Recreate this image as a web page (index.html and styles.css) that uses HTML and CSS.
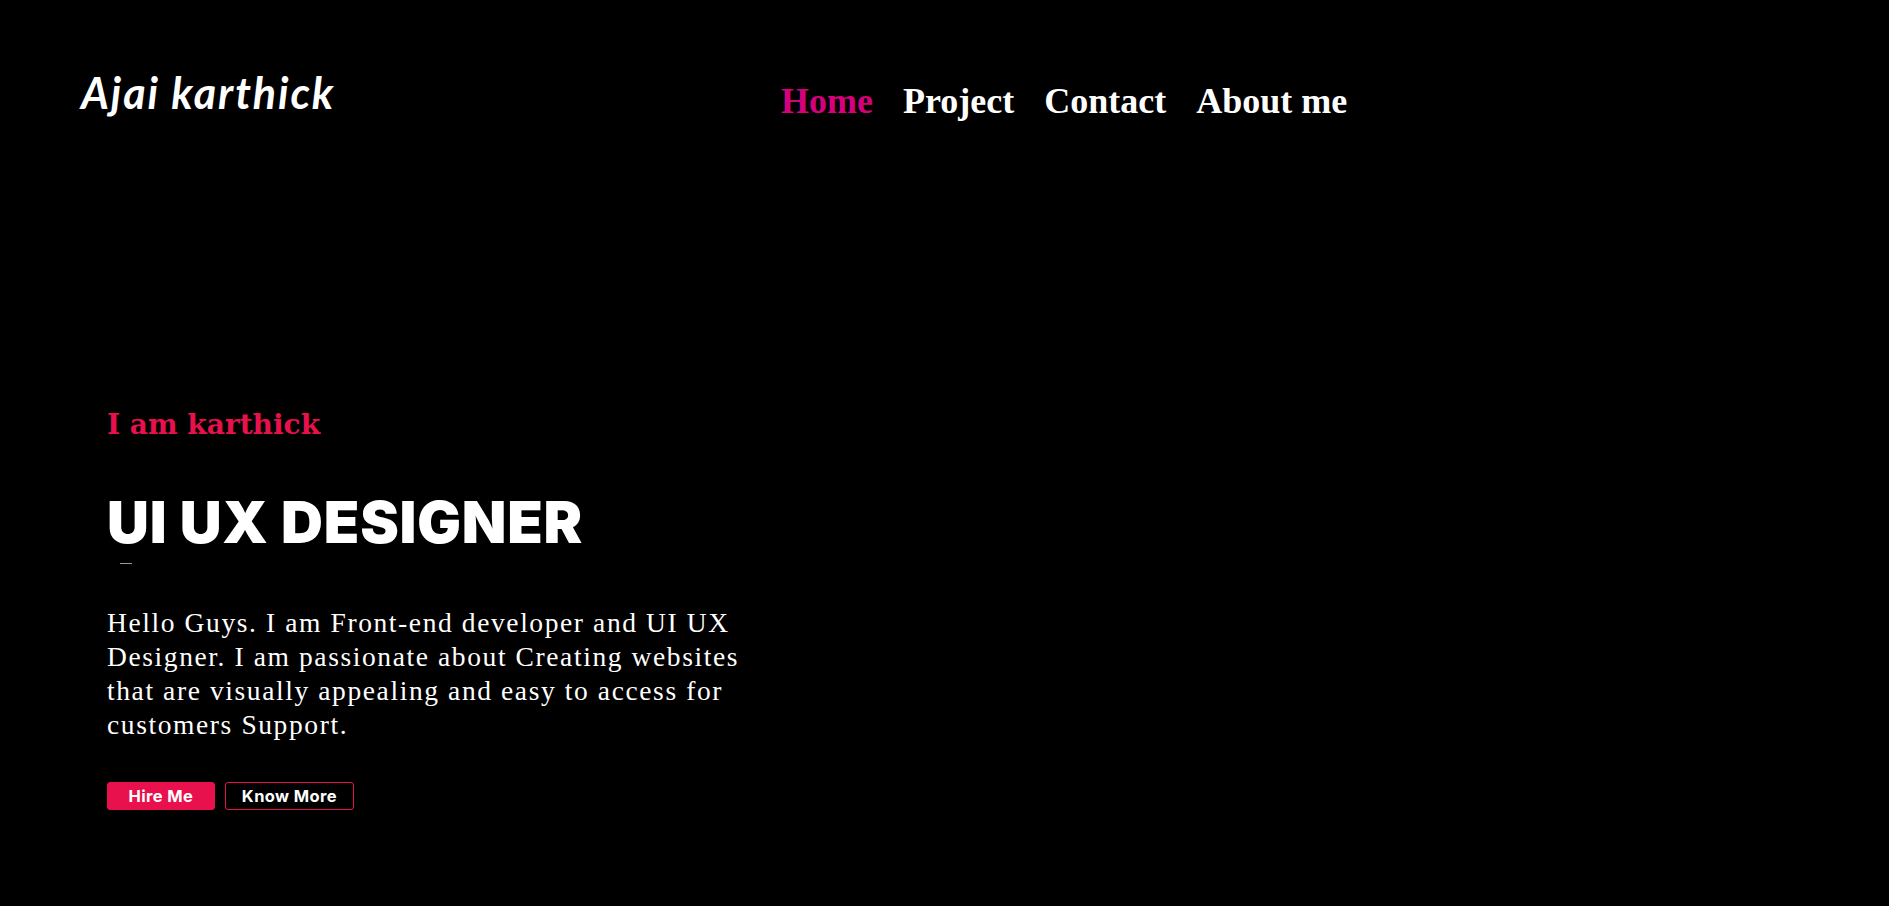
FILE: index.html
```html
<!DOCTYPE html>
<html lang="en">
<head>
<meta charset="utf-8">
<title>Ajai karthick</title>
<link rel="stylesheet" href="styles.css">
</head>
<body>
<header class="header">
  <div class="logo">Ajai karthick</div>
  <nav class="nav">
    <a class="nav-link active" href="#">Home</a>
    <a class="nav-link" href="#">Project</a>
    <a class="nav-link" href="#">Contact</a>
    <a class="nav-link" href="#">About me</a>
  </nav>
</header>
<main class="hero">
  <h3 class="intro">I am karthick</h3>
  <h1 class="title">UI UX DESIGNER</h1>
  <div class="cursor"></div>
  <p class="desc">Hello Guys. I am Front-end developer and UI UX Designer. I am passionate about Creating websites that are visually appealing and easy to access for customers Support.</p>
  <div class="actions">
    <a class="btn btn-primary" href="#">Hire Me</a>
    <a class="btn btn-outline" href="#">Know More</a>
  </div>
</main>
</body>
</html>
```

FILE: styles.css
```css
html, body {
  margin: 0;
  padding: 0;
  background: #000;
  color: #fff;
}
body {
  min-height: 906px;
}
.header {
  display: flex;
  align-items: flex-start;
  padding: 68px 0 0 81px;
}
.logo {
  flex: 0 0 700px;
  font-family: Lato, "Open Sans", sans-serif;
  font-weight: 700;
  font-style: italic;
  font-size: 43px;
  letter-spacing: 1.9px;
  line-height: 50px;
  color: #fff;
}
.nav {
  display: flex;
  gap: 30px;
  margin-top: 13px;
}
.nav-link {
  font-family: "Liberation Serif", "Times New Roman", serif;
  font-weight: 700;
  font-size: 36px;
  line-height: 40px;
  color: #fff;
  text-decoration: none;
}
.nav-link.active {
  color: #d6007d;
}
.hero {
  padding-left: 107px;
}
.intro {
  margin: 287px 0 0 0;
  font-family: "DejaVu Serif", serif;
  font-weight: 700;
  font-size: 28px;
  line-height: 34px;
  color: #e8104d;
}
.title {
  margin: 45px 0 0 0;
  font-family: Inter, "Open Sans", sans-serif;
  font-weight: 900;
  font-size: 58px;
  letter-spacing: 0.8px;
  line-height: 70px;
  color: #fff;
}
.cursor {
  width: 12px;
  height: 1px;
  background: #9a9a9a;
  margin: 6px 0 0 13px;
}
.desc {
  margin: 42px 0 0 0;
  width: 655px;
  font-family: "Liberation Serif", "Times New Roman", serif;
  font-size: 27.5px;
  letter-spacing: 1.6px;
  line-height: 34px;
  color: #fff;
}
.actions {
  display: flex;
  gap: 10px;
  margin-top: 40px;
}
.btn {
  display: inline-flex;
  align-items: center;
  justify-content: center;
  height: 28px;
  box-sizing: border-box;
  border: 1px solid #e8104d;
  border-radius: 3px;
  font-family: Inter, "Open Sans", sans-serif;
  font-weight: 700;
  font-size: 16.5px;
  letter-spacing: 0.4px;
  color: #fff;
  text-decoration: none;
}
.btn-primary {
  background: #e8104d;
  padding: 0 20.5px;
}
.btn-outline {
  background: transparent;
  padding: 0 16px;
}
```
